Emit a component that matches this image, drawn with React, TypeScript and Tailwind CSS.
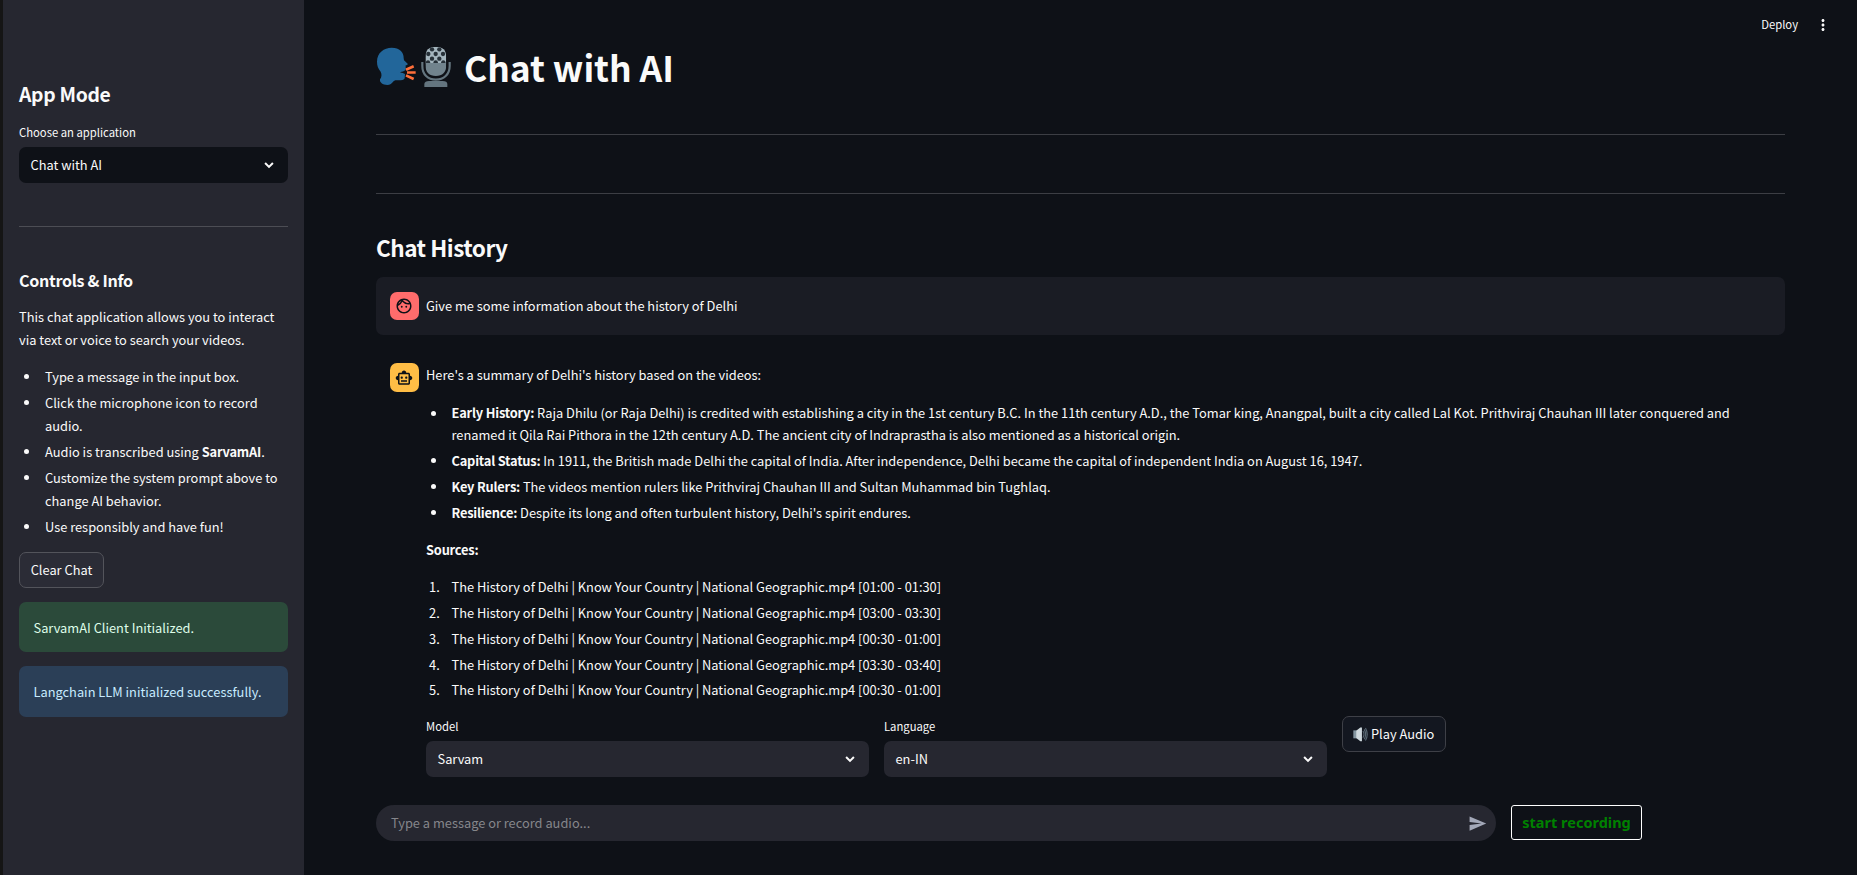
import React from "react";
import { MdOutlineFace, MdOutlineSmartToy, MdSend, MdMoreVert } from "react-icons/md";

const history = [
  ["Capital Status:", "In 1911, the British made Delhi the capital of India. After independence, Delhi became the capital of independent India on August 16, 1947."],
  ["Key Rulers:", "The videos mention rulers like Prithviraj Chauhan III and Sultan Muhammad bin Tughlaq."],
  ["Resilience:", "Despite its long and often turbulent history, Delhi's spirit endures."],
];

const sources = ["01:00 - 01:30", "03:00 - 03:30", "00:30 - 01:00", "03:30 - 03:40", "00:30 - 01:00"];

const meshHoles = [
  [216, 58], [238, 58], [205, 72], [227, 72], [249, 72], [216, 86], [238, 86], [204, 97], [227, 97], [250, 97],
];

function TitleIcons() {
  return (
    <svg viewBox="48 48 228 126" className="h-[42px] w-[76px] shrink-0" aria-hidden="true">
      <path
        fill="#22669a"
        d="M51 95C51 68 72 53 95 53C119 53 131 66 131 84L132 91L143 101C144 104 141 105 137 106L137 120C132 124 126 125 120 127C126 130 131 129 135 132L134 145C132 152 120 151 106 151C97 153 98 165 82 165C68 165 58 157 60 148C65 142 66 133 62 125C54 115 51 107 51 95Z"
      />
      <path stroke="#ff6f3a" strokeWidth="8" d="M138 119L161 109M141 127.500H167M138 136L161 147" />
      <clipPath id="capsule">
        <path d="M196 82C196 60 207 50 227.500 50S259 60 259 82V105C259 127 247 138 227.500 138S196 127 196 105Z" />
      </clipPath>
      <g clipPath="url(#capsule)">
        <rect x="196" y="50" width="63" height="50" fill="#a3b4bd" />
        {meshHoles.map(([cx, cy]) => (
          <circle key={`${cx}-${cy}`} cx={cx} cy={cy} r="6.500" fill="#263038" />
        ))}
        <rect x="196" y="99" width="63" height="40" fill="#71838d" />
      </g>
      <path fill="none" stroke="#64757f" strokeWidth="6.500" d="M187 96V108C187 134 204 149 227.500 149S269 134 269 108V96" />
      <path fill="#64757f" d="M193 171V162C193 156 199 153 207 153H248C257 153 262 156 262 162V171Z" />
    </svg>
  );
}

function SpeakerIcon() {
  return (
    <svg viewBox="68 49 47 46" className="mr-[3px] h-[15px] w-[15px] shrink-0" aria-hidden="true">
      <path fill="#8496a1" d="M69 59H80V84H69Z" />
      <path fill="#cfd9de" d="M78 60L91 50H96V93H91L78 83Z" />
      <path fill="none" stroke="#596873" strokeWidth="3.500" d="M99 61C103 67 103 76 99 82M103 56C109 66 109 77 103 87M107 52C114 64 114 79 107 91" />
    </svg>
  );
}

function Chevron() {
  return (
    <svg viewBox="0 0 18 18" className="mb-px size-[18px]" fill="none" stroke="currentColor" strokeWidth="2" aria-hidden="true">
      <path d="M5.100 7L9 10.900L12.900 7" />
    </svg>
  );
}

function Bullet() {
  return <span className="mt-[9px] mr-[16px] ml-[5px] size-[5px] shrink-0 rounded-full bg-[#fafafa]" />;
}

function Select({ value, className }: { value: string; className: string }) {
  return (
    <div className={`flex h-9 items-center justify-between rounded-[7px] pl-[11.5px] pr-[10px] ${className}`}>
      <span className="pb-px">{value}</span>
      <Chevron />
    </div>
  );
}

function Sidebar() {
  return (
    <aside className="flex w-[304px] shrink-0 flex-col border-l-[3px] border-[#151515] bg-[#262730] pt-[81px] pr-4 pl-4">
      <h2 className="h-[26px] text-[19.34px] leading-[26px] font-bold tracking-[-0.3px]">App Mode</h2>
      <label className="mt-[15px] pt-px text-[11.28px] leading-[19px]">Choose an application</label>
      <Select value="Chat with AI" className="mt-[5px] bg-[#0e1117]" />
      <hr className="mt-[43px] border-[#4c4d54]" />
      <h3 className="mt-[42px] text-[16.1px] leading-[22px] font-bold tracking-[-0.3px]">Controls &amp; Info</h3>
      <p className="mt-[14px]">
        This chat application allows you to interact
        <br />
        via text or voice to search your videos.
      </p>
      <ul className="mt-[14px] flex flex-col gap-[3px]">
        <li className="flex"><Bullet /><span>Type a message in the input box.</span></li>
        <li className="flex"><Bullet /><span>Click the microphone icon to record<br />audio.</span></li>
        <li className="flex"><Bullet /><span>Audio is transcribed using <b className="font-semibold tracking-[-0.18px]">SarvamAI</b>.</span></li>
        <li className="flex"><Bullet /><span>Customize the system prompt above to<br />change AI behavior.</span></li>
        <li className="flex"><Bullet /><span>Use responsibly and have fun!</span></li>
      </ul>
      <button className="mt-[14px] h-9 w-[85px] rounded-[7px] border border-[#53545b] bg-[#2b2c36] pb-[2px]">Clear Chat</button>
      <div className="mt-[14px] flex h-[50px] items-center rounded-[7px] bg-[#2b4a3a] pl-[14.5px] text-[#dffde9]">SarvamAI Client Initialized.</div>
      <div className="mt-[14px] flex h-[51px] items-center rounded-[7px] bg-[#2b3f57] pl-[14.5px] text-[#c7ebff]">Langchain LLM initialized successfully.</div>
    </aside>
  );
}

export default function App() {
  return (
    <div className="flex h-[875px] w-[1857px] overflow-hidden bg-[#0e1117] text-[12.84px] leading-[23px] whitespace-nowrap text-[#fafafa] [font-family:'Noto_Sans_CJK_SC',sans-serif]">
      <Sidebar />
      <main className="relative flex w-[1481px] flex-col pt-[42px] pl-[72px]">
        <div className="absolute top-[13px] -right-[47px] flex items-center gap-4">
          <span className="text-[11.28px]">Deploy</span>
          <MdMoreVert className="size-[18px]" />
        </div>
        <h1 className="flex h-12 items-start text-[35.45px] leading-[50px] font-bold tracking-[-0.06px]">
          <span className="mr-3 pt-1"><TitleIcons /></span>
          Chat with AI
        </h1>
        <hr className="mt-[44px] border-[#3c3e44]" />
        <hr className="mt-[58px] border-[#3c3e44]" />
        <h2 className="mt-[38px] text-[22.56px] leading-[30px] font-bold tracking-[-0.5px]">Chat History</h2>
        <div className="mt-[15px] flex h-[58px] items-center gap-[7px] rounded-[7px] bg-[#1a1c24] pl-[14px]">
          <span className="flex h-[28px] w-[29px] items-center justify-center rounded-[7px] bg-[#ff6c6c] pr-px text-[#0e1117]"><MdOutlineFace className="size-[18px]" /></span>
          <span className="pb-[2px]">Give me some information about the history of Delhi</span>
        </div>
        <div className="mt-7 flex gap-[7px] pl-[14px]">
          <span className="flex size-[29px] shrink-0 items-center justify-center rounded-[7px] bg-[#ffbd45] pr-px text-[#0e1117]"><MdOutlineSmartToy className="size-[18px]" /></span>
          <div className="flex flex-1 flex-col">
            <p>Here's a summary of Delhi's history based on the videos:</p>
            <ul className="mt-[15px] -ml-[0.5px] flex flex-col gap-[3px]">
              <li className="flex h-[45px] pt-px leading-[22px]">
                <Bullet />
                <span>
                  <b className="font-semibold tracking-[-0.2px]">Early History:</b> Raja Dhilu (or Raja Delhi) is credited with establishing a city in the 1st century B.C. In the 11th century A.D., the Tomar king, Anangpal, built a city called Lal Kot. Prithviraj Chauhan III later conquered and
                  <br />
                  renamed it Qila Rai Pithora in the 12th century A.D. The ancient city of Indraprastha is also mentioned as a historical origin.
                </span>
              </li>
              {history.map(([name, text]) => (
                <li key={name} className="flex"><Bullet /><span><b className="font-semibold tracking-[-0.2px]">{name}</b> {text}</span></li>
              ))}
            </ul>
            <p className="mt-[14px] font-semibold tracking-[-0.2px]">Sources:</p>
            <ol className="mt-[14px] -ml-[0.5px] flex flex-col gap-[3px]">
              {sources.map((time, i) => (
                <li key={i} className="flex last:-mt-[0.8px]"><span className="w-[26px] pl-[3.5px]">{i + 1}.</span><span>The History of Delhi | Know Your Country | National Geographic.mp4 [{time}]</span></li>
              ))}
            </ol>
            <div className="mt-[14.8px] flex items-start gap-[15px]">
              <div className="w-[443px]">
                <div className="mb-[5px] pt-px text-[11.28px] leading-[19px]">Model</div>
                <Select value="Sarvam" className="bg-[#262730]" />
              </div>
              <div className="w-[443px]">
                <div className="mb-[5px] pt-px text-[11.28px] leading-[19px]">Language</div>
                <Select value="en-IN" className="bg-[#262730]" />
              </div>
              <button className="flex h-9 w-[104px] items-center rounded-[7px] border border-[#3e4047] bg-[#131720] pl-[10px]">
                <SpeakerIcon />
                <span className="pb-[2px]">Play Audio</span>
              </button>
            </div>
          </div>
        </div>
        <div className="mt-7 flex gap-[15px]">
          <div className="flex h-9 w-[1120px] items-center justify-between rounded-full bg-[#262730] pr-[9px] pl-[15px]">
            <span className="pb-[2px] text-[#85868b]">Type a message or record audio...</span>
            <MdSend className="size-[19px] text-[#a3a8b8]" />
          </div>
          <button className="h-[35px] w-[131px] rounded-[3px] border border-white text-[14.5px] font-bold text-[#008000] [font-family:'Noto_Sans',sans-serif]">start recording</button>
        </div>
      </main>
    </div>
  );
}
